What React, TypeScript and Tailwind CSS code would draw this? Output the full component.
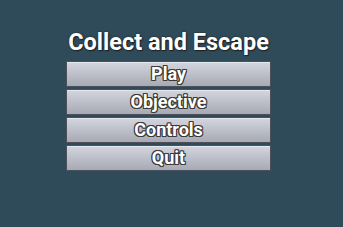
import React from "react";

const items = ["Play", "Objective", "Controls", "Quit"];

const outline =
  "[text-shadow:-1px_0_0_#3a3a3a,1px_0_0_#3a3a3a,0_-1px_0_#3a3a3a,0_1px_0_#3a3a3a,-1px_-1px_0_#3a3a3a,1px_1px_0_#3a3a3a,-1px_1px_0_#3a3a3a,1px_-1px_0_#3a3a3a]";

export default function App() {
  return (
    <div className="w-[343px] h-[227px] bg-[#2f4b5a] flex flex-col items-center pt-[28px] pr-[6px] font-['Roboto',sans-serif]">
      <div className="text-white font-bold text-[23.5px] leading-[28px] [text-shadow:0_0_2px_#1a1a1a,1px_1px_1px_#222]">
        Collect and Escape
      </div>
      <div className="mt-[5px] flex flex-col gap-[2px] w-[205px]">
        {items.map((t) => (
          <div
            key={t}
            className="h-[26px] flex items-center justify-center border border-[#4b505a] bg-gradient-to-b from-[#d3d6de] to-[#a7aab4] shadow-[inset_0_1px_0_#e6e8ee]"
          >
            <span className={"text-white font-bold text-[18px] leading-none " + outline}>
              {t}
            </span>
          </div>
        ))}
      </div>
    </div>
  );
}
